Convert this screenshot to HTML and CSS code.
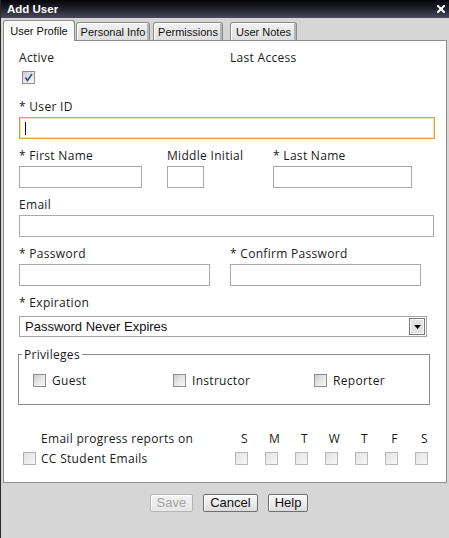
FILE: index.html
```html
<!DOCTYPE html>
<html lang="en">
<head>
<meta charset="utf-8">
<title>Add User</title>
<link rel="stylesheet" href="styles.css">
</head>
<body>
<div class="window">
  <div class="titlebar">
    <span class="title">Add User</span>
    <svg class="close" width="8" height="8" viewBox="0 0 8 8"><path d="M1 1L7 7M7 1L1 7" stroke="#fff" stroke-width="2" stroke-linecap="square"/></svg>
  </div>
  <div class="tabs">
    <div class="tab tab-active tab-profile">User Profile</div>
    <div class="tab tab-personal">Personal Info</div>
    <div class="tab tab-perm">Permissions</div>
    <div class="tab tab-notes">User Notes</div>
  </div>
  <div class="panel">
    <div class="row-top">
      <div class="field field-active">
        <span class="label">Active</span>
        <span class="cb cb-checked"><svg width="11" height="11" viewBox="0 0 11 11"><path d="M2.5 5.5L4.5 8.5L9 2" fill="none" stroke="#2f4f9f" stroke-width="1.6"/></svg></span>
      </div>
      <span class="label">Last Access</span>
    </div>

    <div class="field field-userid">
      <span class="label">* User ID</span>
      <div class="input-wrap">
        <input class="input input-focus w-userid" type="text">
        <span class="caret"></span>
      </div>
    </div>

    <div class="row row-names">
      <div class="field"><span class="label">* First Name</span><input class="input w-first" type="text"></div>
      <div class="field"><span class="label">Middle Initial</span><input class="input w-mid" type="text"></div>
      <div class="field"><span class="label">* Last Name</span><input class="input w-last" type="text"></div>
    </div>

    <div class="field row">
      <span class="label">Email</span>
      <input class="input w-email" type="text">
    </div>

    <div class="row row-pass">
      <div class="field"><span class="label">* Password</span><input class="input w-pass" type="password"></div>
      <div class="field"><span class="label">* Confirm Password</span><input class="input w-pass" type="password"></div>
    </div>

    <div class="field row field-exp">
      <span class="label">* Expiration</span>
      <div class="select">
        <span class="select-text">Password Never Expires</span>
        <span class="select-btn"><svg width="7" height="4" viewBox="0 0 7 4"><path d="M0 0H7L3.5 4Z" fill="#000"/></svg></span>
      </div>
    </div>

    <fieldset class="privileges">
      <legend class="label legend">Privileges</legend>
      <div class="priv-grid">
        <div class="check-item"><span class="cb"></span><span class="label">Guest</span></div>
        <div class="check-item"><span class="cb"></span><span class="label">Instructor</span></div>
        <div class="check-item"><span class="cb"></span><span class="label">Reporter</span></div>
      </div>
    </fieldset>

    <div class="reports">
      <span></span>
      <span class="label">Email progress reports on</span>
      <span class="label day">S</span>
      <span class="label day">M</span>
      <span class="label day">T</span>
      <span class="label day">W</span>
      <span class="label day">T</span>
      <span class="label day">F</span>
      <span class="label day">S</span>

      <span class="cb cb-cc"></span>
      <span class="label">CC Student Emails</span>
      <span class="cb cb-day"></span>
      <span class="cb cb-day"></span>
      <span class="cb cb-day"></span>
      <span class="cb cb-day"></span>
      <span class="cb cb-day"></span>
      <span class="cb cb-day"></span>
      <span class="cb cb-day"></span>
    </div>
  </div>
  <div class="buttons">
    <button class="btn btn-disabled" type="button">Save</button>
    <button class="btn" type="button">Cancel</button>
    <button class="btn" type="button">Help</button>
  </div>
</div>
</body>
</html>
```
FILE: styles.css
```css
* { box-sizing: border-box; }

html, body {
  margin: 0;
  padding: 0;
}

body {
  width: 449px;
  height: 538px;
  overflow: hidden;
  background: #d6d6d6;
  font-family: "Open Sans", "DejaVu Sans", sans-serif;
  color: #1a1a1a;
}

.window {
  height: 538px;
  border-left: 1px solid #2a2a2a;
}

.titlebar {
  height: 18px;
  display: flex;
  align-items: center;
  justify-content: space-between;
  padding: 0 4px 0 6px;
  background: linear-gradient(to bottom, #050508 0%, #1e1e28 45%, #4a4a5e 100%);
}

.title {
  font-family: "Liberation Sans", Arial, sans-serif;
  font-weight: bold;
  font-size: 11.5px;
  color: #fff;
}

.close { display: block; }

.tabs {
  height: 22px;
  display: flex;
  align-items: flex-end;
  padding-left: 2px;
}

.tab {
  height: 18px;
  display: flex;
  align-items: center;
  justify-content: center;
  font-family: "Liberation Sans", Arial, sans-serif;
  font-size: 11px;
  color: #111;
  border: 1px solid #8a8a8a;
  border-bottom: none;
  border-radius: 3px 3px 0 0;
  background: linear-gradient(to bottom, #f2f2f2, #dedede);
  box-shadow: inset 1px 1px 0 #fff, inset -2px 0 0 #b4b4b4;
}

.tab-active {
  position: relative;
  height: 21px;
  margin-bottom: -1px;
  padding-bottom: 1px;
  background: linear-gradient(to bottom, #f4f4f4, #ffffff);
  box-shadow: inset 1px 1px 0 #fff;
}

.tab-profile { width: 72px; }
.tab-personal { width: 74px; margin-left: 1px; }
.tab-perm { width: 70px; margin-left: 3px; }
.tab-notes { width: 67px; margin-left: 7px; }

.panel {
  margin-left: 2px;
  width: 444px;
  background: #fff;
  border: 1px solid #909090;
  padding: 8px 0 16px 15px;
}

.label {
  font-size: 12px;
  line-height: 14px;
  padding-top: 2px;
  letter-spacing: 0.3px;
  white-space: nowrap;
}

.field {
  display: flex;
  flex-direction: column;
  align-items: flex-start;
  gap: 3px;
}

.row { margin-top: 8px; }

.row-top {
  display: grid;
  grid-template-columns: 211px auto;
  align-items: start;
}

.field-active { gap: 6px; }
.field-active .cb { margin-left: 3px; }

.field-userid { margin-top: 14px; }

.row-names {
  display: grid;
  grid-template-columns: 148px 106px 139px;
}

.row-pass {
  display: grid;
  grid-template-columns: 211px 191px;
}

.input {
  display: block;
  height: 22px;
  margin: 0;
  border: 1px solid #a9a9a9;
  background: #fff;
  font: 12px "Liberation Sans", Arial, sans-serif;
  outline: none;
}

.input-focus {
  border-color: #d8a24c;
  box-shadow: inset 0 0 0 1px #f6dfae;
}

.input-wrap { position: relative; }

.caret {
  position: absolute;
  left: 6px;
  top: 5px;
  width: 1px;
  height: 13px;
  background: #000;
}

.w-userid { width: 416px; }
.w-first { width: 123px; }
.w-mid { width: 37px; }
.w-last { width: 139px; }
.w-email { width: 415px; }
.w-pass { width: 191px; }

.field-exp { gap: 6px; }

.select {
  width: 408px;
  height: 21px;
  display: flex;
  align-items: center;
  justify-content: space-between;
  border: 1px solid #a4a4a4;
  padding: 0 1px 0 5px;
  background: #fff;
}

.select-text {
  font-family: "Liberation Sans", Arial, sans-serif;
  font-size: 13px;
  color: #111;
}

.select-btn {
  width: 16px;
  height: 17px;
  display: flex;
  align-items: center;
  justify-content: center;
  border: 1px solid #7a7a7a;
  box-shadow: inset 0 0 0 1px #fafafa;
  background: #e2e2e2;
}

.select-btn svg { display: block; margin-top: 1px; }

.privileges {
  margin: 9px 0 0 -1px;
  width: 412px;
  padding: 10px 0 16px 0;
  border: 1px solid #8c8c8c;
  min-width: 0;
}

.legend {
  margin-left: 3px;
  padding: 2px 2px 0;
}

.priv-grid {
  display: grid;
  grid-template-columns: 140px 141px auto;
  padding-left: 14px;
}

.check-item {
  display: flex;
  align-items: center;
  gap: 6px;
}

.cb {
  display: block;
  width: 13px;
  height: 13px;
  border: 1px solid #8f8f8f;
  background: linear-gradient(135deg, #cbcbcb 0%, #e9e9e9 55%, #f7f7f7 100%);
}

.cb-checked {
  display: flex;
  align-items: center;
  justify-content: center;
}

.cb-checked svg { display: block; }

.reports {
  margin-top: 25px;
  display: grid;
  grid-template-columns: 22px 194px repeat(7, 30px);
  row-gap: 4px;
  align-items: center;
}

.day {
  width: 19px;
  text-align: center;
}

.cb-cc {
  margin-left: 4px;
  border-color: #b0b0b0;
  background: linear-gradient(135deg, #e2e2e2, #f6f6f6);
}

.cb-day {
  border-color: #b8b8b8;
  background: linear-gradient(135deg, #e4e4e4, #f6f6f6);
}

.buttons {
  margin-top: 11px;
  display: flex;
  justify-content: center;
  gap: 10px;
  padding-left: 8px;
}

.btn {
  height: 18px;
  margin: 0;
  padding: 0 6px;
  font-family: "Liberation Sans", Arial, sans-serif;
  font-size: 13px;
  line-height: 14px;
  color: #111;
  border: 1px solid #6e6e6e;
  border-radius: 2px;
  background: linear-gradient(to bottom, #fbfbfb, #dcdcdc);
  box-shadow: inset 1px 1px 0 #fff;
}

.btn-disabled {
  color: #a2a2a2;
  border-color: #b4b4b4;
  background: linear-gradient(to bottom, #f4f4f4, #e6e6e6);
}
```
